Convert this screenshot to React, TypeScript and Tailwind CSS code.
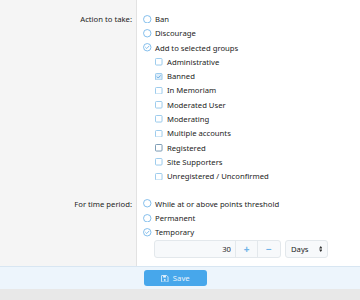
import { useState } from "react";

const groups = [
  "Administrative",
  "Banned",
  "In Memoriam",
  "Moderated User",
  "Moderating",
  "Multiple accounts",
  "Registered",
  "Site Supporters",
  "Unregistered / Unconfirmed",
];

function RadioIcon({ checked }: { checked: boolean }) {
  return (
    <svg width="8.5" height="8.5" viewBox="0 0 16 16" className="shrink-0">
      <circle cx="8" cy="8" r="7" fill="none" stroke="#6fb3e8" strokeWidth="1.6" />
      {checked && (
        <path
          d="M4.8 8.2l2.2 2.2 4.2-4.4"
          fill="none"
          stroke="#6fb3e8"
          strokeWidth="1.6"
          strokeLinecap="round"
          strokeLinejoin="round"
        />
      )}
    </svg>
  );
}

function CheckIcon({ checked, dark }: { checked: boolean; dark?: boolean }) {
  return (
    <svg width="7.5" height="7.5" viewBox="0 0 16 16" className="shrink-0">
      <rect
        x="1"
        y="1"
        width="14"
        height="14"
        rx="2"
        fill={checked ? "#dcecf9" : "none"}
        stroke={dark ? "#6b8fab" : "#8fc3ea"}
        strokeWidth="1.9"
      />
      {checked && (
        <path
          d="M4.5 8.3l2.4 2.4 4.6-5"
          fill="none"
          stroke="#5aa6e2"
          strokeWidth="1.9"
          strokeLinecap="round"
          strokeLinejoin="round"
        />
      )}
    </svg>
  );
}

export default function App() {
  const [action, setAction] = useState("groups");
  const [period, setPeriod] = useState("temporary");
  const [selected, setSelected] = useState<string[]>(["Banned"]);
  const [amount, setAmount] = useState(30);

  const toggle = (g: string) =>
    setSelected((s) => (s.includes(g) ? s.filter((x) => x !== g) : [...s, g]));

  return (
    <div
      className="flex h-[300px] w-[360px] flex-col overflow-hidden bg-[#e8e8e8] text-[7.7px] leading-[14.3px] text-[#1d1d1d]"
      style={{ fontFamily: '"Noto Sans", "Open Sans", sans-serif' }}
    >
      <div className="flex bg-white">
        <div className="w-[137px] shrink-0 border-r border-[#e2e2e2] bg-[#f5f5f5] pt-[12px] pb-[6.5px] pr-[4px] text-right">
          Action to take:
        </div>
        <div className="flex-1 pt-[12px] pb-[6.5px] pl-[6px]">
          {[
            ["ban", "Ban"],
            ["discourage", "Discourage"],
            ["groups", "Add to selected groups"],
          ].map(([k, label]) => (
            <div
              key={k}
              className="flex cursor-pointer items-center gap-[3.5px]"
              onClick={() => setAction(k)}
            >
              <RadioIcon checked={action === k} />
              <span>{label}</span>
            </div>
          ))}
          <div className="pl-[12px]">
            {groups.map((g) => (
              <div
                key={g}
                className="flex cursor-pointer items-center gap-[4.5px]"
                onClick={() => toggle(g)}
              >
                <CheckIcon checked={selected.includes(g)} dark={g === "Registered"} />
                <span>{g}</span>
              </div>
            ))}
          </div>
        </div>
      </div>

      <div className="flex bg-white">
        <div className="w-[137px] shrink-0 border-r border-[#e2e2e2] bg-[#f5f5f5] pt-[6.5px] pb-[8px] pr-[4px] text-right">
          For time period:
        </div>
        <div className="flex-1 pt-[6.5px] pb-[8px] pl-[6px]">
          {[
            ["points", "While at or above points threshold"],
            ["permanent", "Permanent"],
            ["temporary", "Temporary"],
          ].map(([k, label]) => (
            <div
              key={k}
              className="flex cursor-pointer items-center gap-[3.5px]"
              onClick={() => setPeriod(k)}
            >
              <RadioIcon checked={period === k} />
              <span>{label}</span>
            </div>
          ))}
          <div className="mt-[1px] flex h-[18px] items-stretch gap-[4px] pl-[11px]">
            <div className="flex w-[127px] overflow-hidden rounded-[3px] border border-[#e3e8ec] bg-[#f7f9fb]">
              <input
                value={amount}
                onChange={(e) => setAmount(Number(e.target.value) || 0)}
                className="w-[80px] bg-transparent pr-[4px] text-right outline-none"
              />
              <button
                onClick={() => setAmount(amount + 1)}
                className="flex w-[22px] items-center justify-center border-l border-[#e3e8ec] text-[10px] font-bold text-[#6fb3e8]"
              >
                +
              </button>
              <button
                onClick={() => setAmount(Math.max(0, amount - 1))}
                className="flex flex-1 items-center justify-center border-l border-[#e3e8ec] text-[10px] font-bold text-[#6fb3e8]"
              >
                −
              </button>
            </div>
            <div className="flex w-[43px] items-center justify-between rounded-[3px] border border-[#e3e8ec] bg-[#f7f9fb] pl-[5px] pr-[5px]">
              <span>Days</span>
              <svg width="3.5" height="6" viewBox="0 0 4 7">
                <path d="M2 0L4 2.8H0z M2 7L0 4.2h4z" fill="#333" />
              </svg>
            </div>
          </div>
        </div>
      </div>

      <div className="flex h-[23px] items-center border-t border-[#d8e6f2] bg-[#edf5fc] pl-[144px]">
        <button className="flex h-[16px] w-[63px] items-center justify-center gap-[4px] rounded-[3px] bg-[#47a7eb] text-[7.7px] text-[#e8f3fc]">
          <svg width="7.5" height="7.5" viewBox="0 0 16 16">
            <path
              d="M2 1h10l3 3v10a1 1 0 0 1-1 1H2a1 1 0 0 1-1-1V2a1 1 0 0 1 1-1z"
              fill="none"
              stroke="#e8f3fc"
              strokeWidth="1.8"
            />
            <rect x="4.5" y="1.5" width="6" height="4" fill="#e8f3fc" />
            <circle cx="8" cy="10.5" r="2" fill="#e8f3fc" />
          </svg>
          <span>Save</span>
        </button>
      </div>
    </div>
  );
}
